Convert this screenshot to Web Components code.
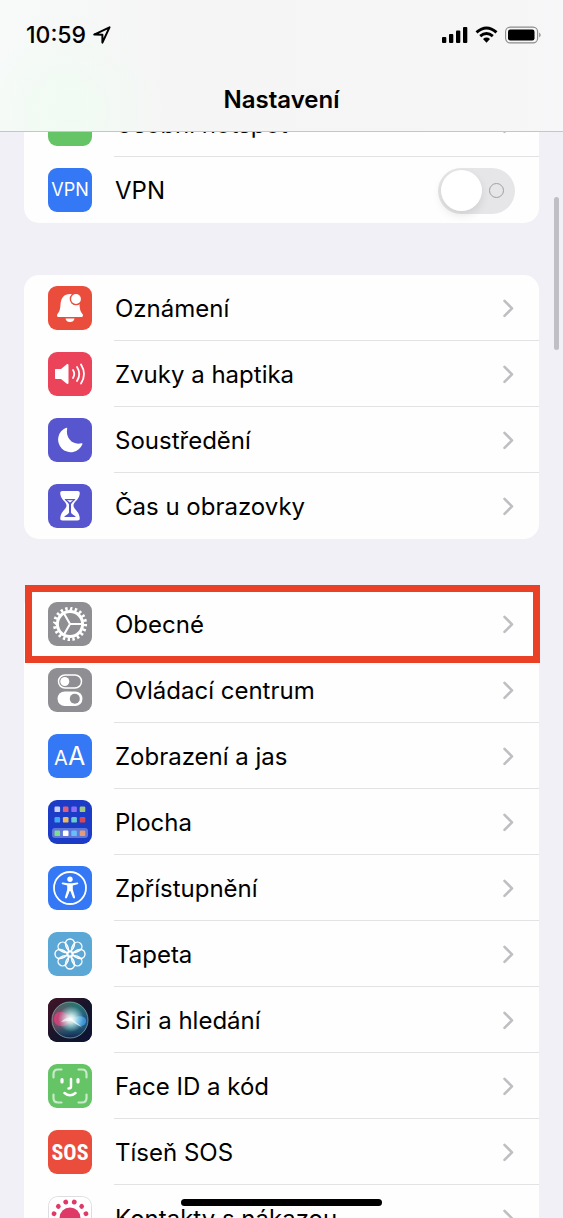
<!DOCTYPE html>
<html lang="cs">
<head>
<meta charset="utf-8">
<meta name="viewport" content="width=device-width, initial-scale=1">
<title>Nastavení</title>
<style>
    body {
        margin: 0;
        background-color: #f0f0f6;
        color: #000000;
        font-family: Inter, "Liberation Sans", sans-serif;
    }
</style>
</head>
<body>
<settings-screen>
    <status-bar slot="top" time="10:59"></status-bar>
    <h1 slot="title">Nastavení</h1>

    <settings-group>
        <settings-row icon="hotspot">Osobní hotspot</settings-row>
        <settings-toggle icon="vpn" label="VPN"></settings-toggle>
    </settings-group>

    <settings-group>
        <settings-row icon="bell">Oznámení</settings-row>
        <settings-row icon="sound">Zvuky a haptika</settings-row>
        <settings-row icon="moon">Soustředění</settings-row>
        <settings-row icon="hourglass">Čas u obrazovky</settings-row>
    </settings-group>

    <settings-group>
        <settings-row icon="gear" marked>Obecné</settings-row>
        <settings-row icon="control">Ovládací centrum</settings-row>
        <settings-row icon="display">Zobrazení a jas</settings-row>
        <settings-row icon="home">Plocha</settings-row>
        <settings-row icon="access">Zpřístupnění</settings-row>
        <settings-row icon="flower">Tapeta</settings-row>
        <settings-row icon="siri">Siri a hledání</settings-row>
        <settings-row icon="face">Face ID a kód</settings-row>
        <settings-row icon="sos">Tíseň SOS</settings-row>
        <settings-row icon="exposure">Kontakty s nákazou</settings-row>
    </settings-group>
</settings-screen>

<script>
const range = n => Array.from({ length: n }, (_, i) => i);

const homeColors = [
    ['#c9d0f2', '#dc5f7c', '#8f6cf5', '#a0c684'],
    ['#40a8f6', '#edb860', '#6cc9cc', '#d4485a'],
    ['#80dc90', '#ffffff', '#68bef8', '#e29c7c']
];

// Each icon: background colour and the drawing, on a 44 x 44 grid
const icons = {
    hotspot: {
        color: '#65c466',
        art: `<g fill="none" stroke="#fff" stroke-width="3">
            <rect x="8" y="16" width="16" height="10" rx="5"/>
            <rect x="20" y="16" width="16" height="10" rx="5"/>
        </g>`
    },
    vpn: {
        color: '#3478f6',
        art: '<text x="22" y="28" font-size="18" text-anchor="middle">VPN</text>'
    },
    bell: {
        color: '#eb4d3d',
        art: `<path d="M22 8c-6 0-9 4-9.500 10.500-.3 5-1 7-3 9.500-1 1.300-.5 3 1 3h23c1.500 0 2-1.700 1-3-2-2.500-2.700-4.500-3-9.500C31.500 12 28 8 22 8z"/>
            <path d="M17.500 32.500h9c-.5 2.500-2 3.500-4.500 3.500s-4-1-4.500-3.500z"/>
            <circle cx="28" cy="13" r="6.300" fill="#eb4d3d"/>
            <circle cx="28" cy="13" r="4.900"/>`
    },
    sound: {
        color: '#eb445a',
        art: `<path d="M8 17h5l5.500-4.500c1-.8 2-.4 2 .8v17.400c0 1.200-1 1.600-2 .8L13 27H8c-.7 0-1-.4-1-1v-8c0-.6.3-1 1-1z"/>
            <g fill="none" stroke="#fff" stroke-width="1.800" stroke-linecap="round">
                <path d="M25 18q2.500 4 0 8"/>
                <path d="M29 15q4.500 7 0 14"/>
                <path d="M33 12.500q6 9.500 0 19"/>
            </g>`
    },
    moon: {
        color: '#5756ce',
        art: '<path d="M18.200 9.800c.6-.3 1.200.1 1 .9C17.500 18.500 23 27.500 33.500 25.300c.8-.2 1.200.3.9 1A12.600 12.600 0 1 1 18.200 9.800z"/>'
    },
    hourglass: {
        color: '#5756ce',
        art: `<path d="M14.500 7h15c2.500 0 2.500 1.500 2 4-.6 4.500-6 7-6 10.500s5.400 6 6 11c.4 2.500.5 4-2 4h-15c-2.500 0-2.400-1.500-2-4 .6-5 6-7.500 6-11S13.100 15.500 12.500 11c-.5-2.500-.5-4 2-4z"/>
            <path d="M16.500 15h11c-1.300 2.300-3.700 3.300-4.500 5.500v8c.5 2 3.500 2.500 5 4.500H16c1.500-2 4.500-2.500 5-4.500v-8c-.8-2.200-3.200-3.200-4.500-5.500z" fill="#5756ce"/>
            <path d="M19 16.200h6L22 18.500z"/>`
    },
    gear: {
        color: '#8e8e93',
        art: `<g fill="none" stroke="#fff">
            <circle cx="22" cy="22" r="12.600" stroke-width="3"/>
            <circle cx="22" cy="22" r="15.400" stroke-width="3.400" pathLength="40" stroke-dasharray="1 1"/>
            <path d="M22 22h12M22 22l-6-10.400M22 22l-6 10.400" stroke-width="2.100"/>
        </g>`
    },
    control: {
        color: '#8e8e93',
        art: `<rect x="10.500" y="7" width="23" height="13" rx="6.500" fill="none" stroke="#fff" stroke-width="1.500"/>
            <circle cx="16.800" cy="13.500" r="4.500"/>
            <rect x="9.500" y="23.500" width="25" height="14.500" rx="7.200"/>
            <circle cx="26.800" cy="30.700" r="5" fill="#8e8e93"/>`
    },
    display: {
        color: '#3478f6',
        art: '<text x="6" y="31" font-size="20">A</text><text x="20" y="31" font-size="25">A</text>'
    },
    home: {
        color: '#1c3cc8',
        art: `<rect x="4" y="28" width="36" height="10" rx="3" opacity=".3"/>
            ${homeColors.map((line, y) => line.map((fill, x) =>
                `<rect x="${6.500 + x * 8.400}" y="${[6.500, 17, 30.500][y]}" width="5.600" height="5.600" rx="1.200" fill="${fill}"/>`
            ).join('')).join('')}`
    },
    access: {
        color: '#3478f6',
        art: `<circle cx="22" cy="22" r="16" fill="none" stroke="#fff" stroke-width="1.800"/>
            <circle cx="22" cy="13.300" r="2.700"/>
            <path d="M14.800 16.400l5 .9h4.400l5-.9c1.300-.2 1.500 1.500.3 1.800l-4.700 1.200v4l2.200 7.700c.4 1.400-1.400 2-2 .7L22.300 25h-.6L19 31.800c-.6 1.300-2.400.7-2-.7l2.200-7.700v-4l-4.700-1.200c-1.200-.3-1-2 .3-1.800z"/>`
    },
    flower: {
        color: '#5ba7d6',
        art: `<g fill="none" stroke="#fff" stroke-width="1.400">
            ${range(8).map(i => `<path d="M22 20C18.500 17 17.500 14 17.500 11.500a4.500 4.500 0 0 1 9 0C26.500 14 25.500 17 22 20z" transform="rotate(${i * 45} 22 22)"/>`).join('')}
            <circle cx="22" cy="22" r="2.800"/>
        </g>`
    },
    siri: {
        color: '#17152a',
        art: `<defs>
                <linearGradient id="side" x2="1" y2="1">
                    <stop offset="0" stop-color="#451428"/><stop offset=".5" stop-color="#17152a"/><stop offset="1" stop-color="#0c1334"/>
                </linearGradient>
                <linearGradient id="ball" x2="1" y2=".3">
                    <stop offset="0" stop-color="#a82c5c"/><stop offset=".4" stop-color="#76516c"/><stop offset=".65" stop-color="#366f86"/><stop offset="1" stop-color="#235187"/>
                </linearGradient>
                <linearGradient id="shade" x2="0" y2="1">
                    <stop offset="0" stop-color="#1d7866" stop-opacity=".7"/><stop offset=".5" stop-color="#1d7866" stop-opacity="0"/><stop offset="1" stop-color="#102052"/>
                </linearGradient>
                <radialGradient id="glow">
                    <stop offset="0" stop-color="#fff"/><stop offset=".3" stop-color="#eafffa" stop-opacity=".8"/><stop offset="1" stop-color="#bff" stop-opacity="0"/>
                </radialGradient>
            </defs>
            <rect width="44" height="44" rx="9" fill="url(#side)"/>
            <circle cx="22" cy="22" r="18" fill="url(#ball)"/>
            <circle cx="22" cy="22" r="18" fill="url(#shade)" stroke="#86b6a8" stroke-width="1" stroke-opacity=".7"/>
            <path d="M24 22C19 12 7 11 6 20s11 12 18 2z" fill="#ed4180" opacity=".65"/>
            <path d="M23 21c6-4 15-4 15 2s-9 8-15-2z" fill="#45a5ee" opacity=".75"/>
            <circle cx="23" cy="21" r="13" fill="url(#glow)"/>
            <path d="M13 24q5-5 10-4l12 10q-7-4-12-7-5 0-10 1z" opacity=".6"/>`
    },
    face: {
        color: '#65c466',
        art: `<g fill="none" stroke="#fff" stroke-linecap="round">
            <path opacity=".65" stroke-width="2.200" d="M5.500 13.500V10q0-4.500 4.500-4.500h3.500M30.500 5.500H34q4.500 0 4.500 4.500v3.500M38.500 30.500V34q0 4.500-4.500 4.500h-3.500M13.500 38.500H10q-4.500 0-4.500-4.500v-3.500"/>
            <path stroke-width="3.200" d="M14 15.500v2.500M30 15.500v2.500"/>
            <path stroke-width="2.500" d="M23 15v7.500q0 2-2.500 2M16.500 29q5.500 4.500 11 0"/>
        </g>`
    },
    sos: {
        color: '#eb4d3d',
        art: '<text class="narrow" x="22" y="30" font-size="22" font-weight="700" text-anchor="middle">SOS</text>'
    },
    exposure: {
        color: '#ffffff',
        art: `<rect x=".5" y=".5" width="43" height="43" rx="9" stroke="#dedee2"/>
            <g fill="#df3a67">
                <circle cx="22" cy="22" r="10.500"/>
                ${range(12).map(i => `<circle cx="22" cy="5.500" r="2.400" transform="rotate(${15 + i * 30} 22 22)"/>`).join('')}
            </g>`
    }
};

class SettingsIcon extends HTMLElement {
    constructor() {
        super();
        this.attachShadow({ mode: 'open' });
    }

    connectedCallback() {
        const { color, art } = icons[this.getAttribute('name')];
        this.shadowRoot.innerHTML = `
            <style>
                :host {
                    display: block;
                    width: 44px;
                    height: 44px;
                    flex: none;
                    overflow: hidden;
                    border-radius: 9px;
                    background-color: ${color};
                }

                svg {
                    display: block;
                    fill: #ffffff;
                }

                .narrow {
                    font-family: "Liberation Sans Narrow", "Roboto Condensed", "Open Sans Condensed", Roboto, sans-serif;
                }
            </style>
            <svg width="44" height="44" viewBox="0 0 44 44" aria-hidden="true">${art}</svg>
        `;
    }
}

// Shared by the link rows and the toggle row
const rowStyles = `
    :host {
        display: block;
        position: relative;
    }

    .row {
        display: flex;
        gap: 22px;
        padding-left: 24px;
        color: inherit;
        text-decoration: none;
    }

    settings-icon {
        margin-top: 11px;
    }

    .body {
        display: flex;
        flex: 1;
        align-items: center;
        justify-content: space-between;
        box-sizing: border-box;
        height: 66px;
        padding: 2px 24px 0 1px;
        border-bottom: 1px solid #e2e2e5;
        font-size: 24px;
        line-height: 32px;
    }

    :host(:last-child) .body {
        border-bottom-color: transparent;
    }
`;

class SettingsRow extends HTMLElement {
    constructor() {
        super();
        this.attachShadow({ mode: 'open' });
    }

    connectedCallback() {
        this.shadowRoot.innerHTML = `
            <style>
                ${rowStyles}

                /* Red frame drawn over the row */
                :host([marked])::after {
                    content: '';
                    position: absolute;
                    z-index: 1;
                    inset: -6px -1px -6px 1px;
                    border: 7px solid #ea4025;
                    pointer-events: none;
                }
            </style>
            <a class="row" href="#${this.getAttribute('icon')}">
                <settings-icon name="${this.getAttribute('icon')}"></settings-icon>
                <span class="body">
                    <span><slot></slot></span>
                    <svg width="14" height="20" viewBox="0 0 14 20" fill="none" stroke="#bfbfc3" stroke-width="2.600" stroke-linecap="round" stroke-linejoin="round" aria-hidden="true">
                        <path d="M3.500 1.800L11 9.300l-7.500 7.500"/>
                    </svg>
                </span>
            </a>
        `;
    }
}

class SettingsToggle extends HTMLElement {
    constructor() {
        super();
        this.attachShadow({ mode: 'open' });
    }

    connectedCallback() {
        this.shadowRoot.innerHTML = `
            <style>
                ${rowStyles}

                input {
                    appearance: none;
                    display: flex;
                    align-items: center;
                    justify-content: space-between;
                    box-sizing: border-box;
                    width: 77px;
                    height: 46px;
                    margin: 0;
                    padding: 0 11px 0 3px;
                    border-radius: 23px;
                    background-color: #e6e6e8;
                }

                input::before {
                    content: '';
                    width: 41px;
                    height: 41px;
                    border-radius: 50%;
                    background-color: #ffffff;
                    box-shadow: 0 4px 10px rgba(0, 0, 0, 0.1);
                }

                input::after {
                    content: '';
                    box-sizing: border-box;
                    width: 15px;
                    height: 15px;
                    border: 1px solid #a0a0a3;
                    border-radius: 50%;
                }

                input:checked {
                    flex-direction: row-reverse;
                    padding: 0 3px 0 11px;
                    background-color: #65c466;
                }
            </style>
            <div class="row">
                <settings-icon name="${this.getAttribute('icon')}"></settings-icon>
                <div class="body">
                    <label for="switch">${this.getAttribute('label')}</label>
                    <input id="switch" type="checkbox" role="switch">
                </div>
            </div>
        `;
    }
}

class SettingsGroup extends HTMLElement {
    constructor() {
        super();
        this.attachShadow({ mode: 'open' }).innerHTML = `
            <style>
                :host {
                    display: block;
                    border-radius: 15px;
                    background-color: #fefefe;
                }
            </style>
            <slot></slot>
        `;
    }
}

class StatusBar extends HTMLElement {
    constructor() {
        super();
        this.attachShadow({ mode: 'open' });
    }

    connectedCallback() {
        this.shadowRoot.innerHTML = `
            <style>
                :host {
                    display: flex;
                    align-items: center;
                    justify-content: space-between;
                    height: 69px;
                    padding: 0 22px 0 26px;
                }

                .side {
                    display: flex;
                    align-items: center;
                    gap: 7px;
                }

                time {
                    font-size: 23px;
                    font-weight: 500;
                    line-height: 28px;
                }
            </style>
            <div class="side">
                <time>${this.getAttribute('time')}</time>
                <svg width="18" height="18" viewBox="0 0 18 18" fill="none" stroke="#000" stroke-width="2" stroke-linejoin="round" aria-hidden="true">
                    <path d="M1.200 8.600L16.500 1.300 9.400 16.600V8.800z"/>
                </svg>
            </div>
            <div class="side">
                <svg width="26" height="18" viewBox="0 0 26 18" aria-hidden="true">
                    <rect x="0" y="11" width="4.300" height="6" rx="1"/>
                    <rect x="7" y="8" width="4.300" height="9" rx="1"/>
                    <rect x="14" y="4.500" width="4.300" height="12.500" rx="1"/>
                    <rect x="21" y="1" width="4.300" height="16" rx="1"/>
                </svg>
                <svg width="23" height="18" viewBox="0 0 23 18" fill="none" stroke="#000" stroke-width="2.900" aria-hidden="true">
                    <path d="M1.500 6.300Q11.500-2.300 21.500 6.300"/>
                    <path d="M5.200 10.200Q11.500 4.800 17.800 10.200"/>
                    <path d="M8 12.900q3.500-2.700 7 0L11.500 16.800z" fill="#000" stroke="none"/>
                </svg>
                <svg width="36" height="18" viewBox="0 0 36 18" aria-hidden="true">
                    <rect x=".6" y="1.100" width="32" height="15.800" rx="4.600" fill="none" stroke="#8c8c8e" stroke-width="1.100"/>
                    <rect x="3" y="3.500" width="26.500" height="11" rx="2.200"/>
                    <path d="M34.200 6.500q3 2.500 0 5z" fill="#8c8c8e"/>
                </svg>
            </div>
        `;
    }
}

class SettingsScreen extends HTMLElement {
    constructor() {
        super();
        this.attachShadow({ mode: 'open' }).innerHTML = `
            <style>
                :host {
                    display: block;
                    height: 100vh;
                    overflow: hidden;
                }

                header {
                    position: fixed;
                    z-index: 2;
                    top: 0;
                    left: 0;
                    right: 0;
                    border-bottom: 1px solid #c6c6c9;
                    background:
                        radial-gradient(circle at 12% 85%, #f0fbf2, transparent 100px),
                        linear-gradient(to right, #f8fafa, #f5f5f5 30%, #f6f6f6 90%, #f7f7f9);
                }

                ::slotted(h1) {
                    margin: 0;
                    padding: 15px 0;
                    font-size: 24px;
                    font-weight: 600;
                    line-height: 32px;
                    text-align: center;
                }

                /* The list is scrolled: its first row sits half under the header */
                main {
                    display: grid;
                    gap: 52px;
                    padding: 91px 24px 24px;
                }

                .scrollbar {
                    position: fixed;
                    top: 197px;
                    right: 4px;
                    width: 5px;
                    height: 153px;
                    border-radius: 3px;
                    background-color: #bfbfc5;
                }

                .home-bar {
                    position: fixed;
                    z-index: 2;
                    left: 0;
                    right: 0;
                    bottom: 12px;
                    width: 201px;
                    height: 7px;
                    margin: 0 auto;
                    border-radius: 4px;
                    background-color: #000000;
                }
            </style>
            <header>
                <slot name="top"></slot>
                <slot name="title"></slot>
            </header>
            <main><slot></slot></main>
            <div class="scrollbar"></div>
            <div class="home-bar"></div>
        `;
    }
}

window.customElements.define('settings-icon', SettingsIcon);
window.customElements.define('settings-row', SettingsRow);
window.customElements.define('settings-toggle', SettingsToggle);
window.customElements.define('settings-group', SettingsGroup);
window.customElements.define('status-bar', StatusBar);
window.customElements.define('settings-screen', SettingsScreen);
</script>
</body>
</html>
